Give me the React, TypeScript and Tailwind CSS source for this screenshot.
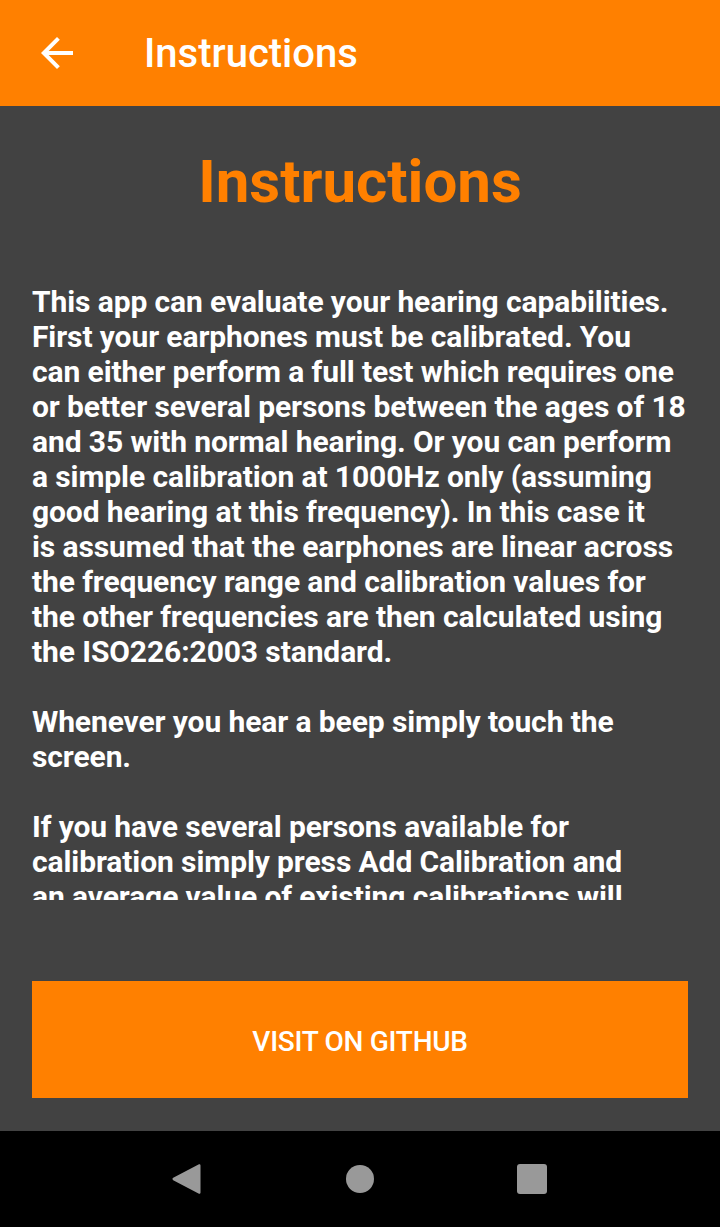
import React from "react";

const para1 = [
  "This app can evaluate your hearing capabilities.",
  "First your earphones must be calibrated. You",
  "can either perform a full test which requires one",
  "or better several persons between the ages of 18",
  "and 35 with normal hearing. Or you can perform",
  "a simple calibration at 1000Hz only (assuming",
  "good hearing at this frequency). In this case it",
  "is assumed that the earphones are linear across",
  "the frequency range and calibration values for",
  "the other frequencies are then calculated using",
  "the ISO226:2003 standard.",
];
const para2 = ["Whenever you hear a beep simply touch the", "screen."];
const para3 = [
  "If you have several persons available for",
  "calibration simply press Add Calibration and",
  "an average value of existing calibrations will",
  "be used.",
];

function Lines({ lines }: { lines: string[] }) {
  return (
    <div>
      {lines.map((l, i) => (
        <div key={i} className="whitespace-nowrap">
          {l}
        </div>
      ))}
    </div>
  );
}

export default function App() {
  return (
    <div
      className="w-[720px] h-[1227px] flex flex-col bg-[#424242] overflow-hidden"
      style={{ fontFamily: "Roboto, 'Noto Sans', sans-serif" }}
    >
      <header className="h-[106px] shrink-0 bg-[#ff8000] flex items-center">
        <div className="w-[48px] h-[48px] ml-[33px] flex items-center justify-center">
          <svg width="48" height="48" viewBox="0 0 24 24" fill="none">
            <path
              d="M20 11H7.83l5.59-5.59L12 4l-8 8 8 8 1.41-1.41L7.83 13H20v-2z"
              fill="#ffffff"
            />
          </svg>
        </div>
        <h1 className="ml-[63px] mt-[2px] text-white text-[40px] font-medium leading-none">
          Instructions
        </h1>
      </header>

      <main className="flex-1 flex flex-col">
        <h2 className="mt-[41px] text-center text-[#ff8000] text-[60px] font-bold leading-[70px]">
          Instructions
        </h2>
        <div className="mt-[67px] h-[616px] overflow-hidden px-[32px] text-white text-[30px] font-bold leading-[35px] tracking-[-0.1px]">
          <Lines lines={para1} />
          <div className="h-[35px]" />
          <Lines lines={para2} />
          <div className="h-[35px]" />
          <Lines lines={para3} />
        </div>
        <div className="mt-[81px] px-[32px]">
          <button className="w-full h-[117px] pt-[4px] bg-[#ff8000] text-white text-[28px] font-medium uppercase tracking-[-0.01em] flex items-center justify-center">
            Visit on GitHub
          </button>
        </div>
      </main>

      <nav className="h-[96px] shrink-0 bg-black flex items-center justify-center">
        <div className="w-[720px] relative h-[96px]">
          <svg
            className="absolute left-[170px] top-[31px]"
            width="32"
            height="34"
            viewBox="0 0 32 34"
          >
            <path
              d="M28.5 2.5 C29.5 1.8 30.5 2.3 30.5 3.5 L30.5 30.5 C30.5 31.7 29.5 32.2 28.5 31.5 L3.2 18.2 C2.2 17.6 2.2 16.4 3.2 15.8 Z"
              fill="#999999"
            />
          </svg>
          <div className="absolute left-[346px] top-[34px] w-[28px] h-[28px] rounded-full bg-[#999999]" />
          <div className="absolute left-[517px] top-[33px] w-[30px] h-[30px] rounded-[3px] bg-[#999999]" />
        </div>
      </nav>
    </div>
  );
}
